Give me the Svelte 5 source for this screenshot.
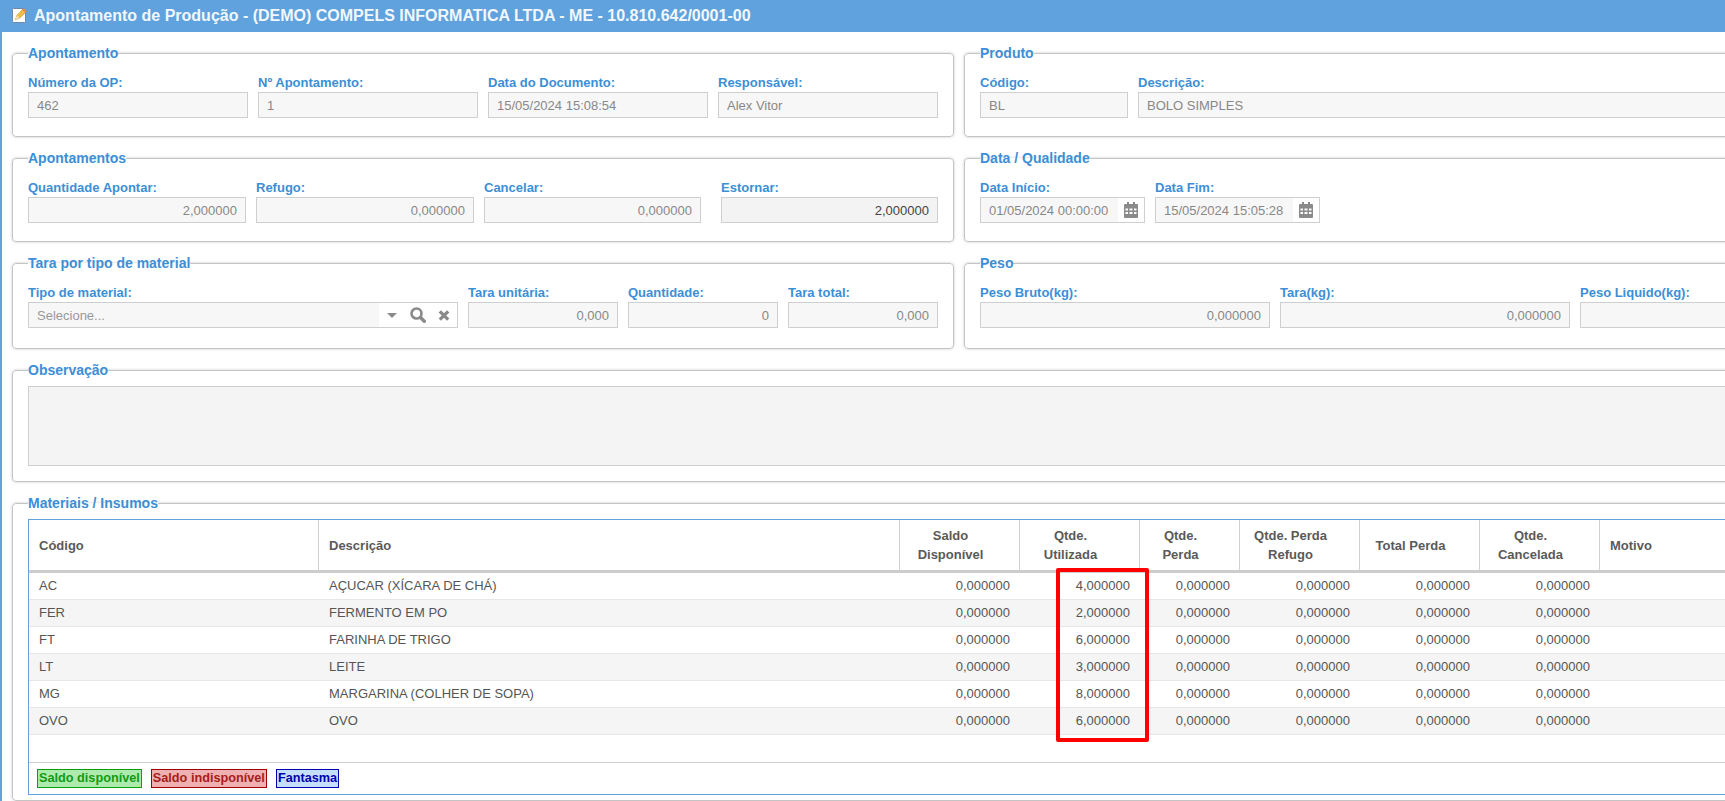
<script>
  const rows = [
    ['AC', 'AÇUCAR (XÍCARA DE CHÁ)', '4,000000'],
    ['FER', 'FERMENTO EM PO', '2,000000'],
    ['FT', 'FARINHA DE TRIGO', '6,000000'],
    ['LT', 'LEITE', '3,000000'],
    ['MG', 'MARGARINA (COLHER DE SOPA)', '8,000000'],
    ['OVO', 'OVO', '6,000000']
  ];
  const zero = '0,000000';
</script>

{#snippet calendar()}
  <svg class="cal" width="14" height="16" viewBox="0 0 14 16" aria-hidden="true">
    <path fill="#8a8a8a" fill-rule="evenodd" d="M3 0h2v2h4V0h2v2h2a1 1 0 0 1 1 1v12a1 1 0 0 1-1 1H1a1 1 0 0 1-1-1V3a1 1 0 0 1 1-1h2V0ZM1.500 6.500v2h2.500v-2H1.500Zm4 0v2h3v-2h-3Zm4.500 0v2h2.500v-2H10Zm-8.500 3.500v2h2.500v-2H1.500Zm4 0v2h3v-2h-3Zm4.500 0v2h2.500v-2H10Z"/>
  </svg>
{/snippet}

<div class="page">
  <header class="bar">
    <svg class="note" width="15" height="16" viewBox="0 0 15 16" aria-hidden="true">
      <rect x="0.500" y="1.500" width="13" height="14" rx="1" fill="#fdfdfd" stroke="#6f88a8"/>
      <path d="M3.500 12.500 5 8.500 11.500 1.500 14.500 4.500 7.500 11Z" fill="#f4bf45" stroke="#c98a1c" stroke-width="0.700" stroke-linejoin="round"/>
      <path d="M3.500 12.500 5 8.500 7.500 11Z" fill="#f6e3bd"/>
      <path d="M11.500 1.500 14.500 4.500 13.200 5.800 10.200 2.900Z" fill="#e08a6c"/>
    </svg>
    <h1>Apontamento de Produção - (DEMO) COMPELS INFORMATICA LTDA - ME - 10.810.642/0001-00</h1>
  </header>

  <main class="main">
    <div class="pair">
      <fieldset class="pb18">
        <legend>Apontamento</legend>
        <div class="fields f-ap">
          <label><span>Número da OP:</span><input disabled value="462" /></label>
          <label><span>Nº Apontamento:</span><input disabled value="1" /></label>
          <label><span>Data do Documento:</span><input disabled value="15/05/2024 15:08:54" /></label>
          <label><span>Responsável:</span><input disabled value="Alex Vitor" /></label>
        </div>
      </fieldset>
      <fieldset class="pb18">
        <legend>Produto</legend>
        <div class="fields f-prod">
          <label><span>Código:</span><input disabled value="BL" /></label>
          <label><span>Descrição:</span><input disabled value="BOLO SIMPLES" /></label>
        </div>
      </fieldset>
    </div>

    <div class="pair">
      <fieldset class="pb18">
        <legend>Apontamentos</legend>
        <div class="fields f-qty">
          <label><span>Quantidade Apontar:</span><input class="num" disabled value="2,000000" /></label>
          <label><span>Refugo:</span><input class="num" disabled value={zero} /></label>
          <label><span>Cancelar:</span><input class="num" disabled value={zero} /></label>
          <label class="estornar"><span>Estornar:</span><input class="num strong" disabled value="2,000000" /></label>
        </div>
      </fieldset>
      <fieldset class="pb18">
        <legend>Data / Qualidade</legend>
        <div class="fields f-date">
          <div class="fld">
            <span class="lbl">Data Início:</span>
            <div class="combo"><div class="value">01/05/2024 00:00:00</div><div class="addon">{@render calendar()}</div></div>
          </div>
          <div class="fld">
            <span class="lbl">Data Fim:</span>
            <div class="combo"><div class="value">15/05/2024 15:05:28</div><div class="addon">{@render calendar()}</div></div>
          </div>
        </div>
      </fieldset>
    </div>

    <div class="pair">
      <fieldset class="pb20">
        <legend>Tara por tipo de material</legend>
        <div class="fields f-tara">
          <div class="fld">
            <span class="lbl">Tipo de material:</span>
            <div class="combo">
              <div class="value ph">Selecione...</div>
              <div class="addon tools">
                <svg width="10" height="5" viewBox="0 0 10 5" aria-hidden="true"><path d="M0 0h10L5 5Z" fill="#8a8a8a"/></svg>
                <svg width="16" height="16" viewBox="0 0 16 16" aria-hidden="true"><circle cx="6.500" cy="6.500" r="5" fill="none" stroke="#8a8a8a" stroke-width="2.600"/><path d="M10.500 10.500 14.300 14.300" stroke="#8a8a8a" stroke-width="3.400" stroke-linecap="round"/></svg>
                <svg class="x" width="12" height="11" viewBox="0 0 12 11" aria-hidden="true"><path d="M1.800 1.300 10.200 9.700M10.200 1.300 1.800 9.700" stroke="#8a8a8a" stroke-width="3.300"/></svg>
              </div>
            </div>
          </div>
          <label><span>Tara unitária:</span><input class="num" disabled value="0,000" /></label>
          <label><span>Quantidade:</span><input class="num" disabled value="0" /></label>
          <label><span>Tara total:</span><input class="num" disabled value="0,000" /></label>
        </div>
      </fieldset>
      <fieldset class="pb20">
        <legend>Peso</legend>
        <div class="fields f-peso">
          <label><span>Peso Bruto(kg):</span><input class="num" disabled value={zero} /></label>
          <label><span>Tara(kg):</span><input class="num" disabled value={zero} /></label>
          <label><span>Peso Liquido(kg):</span><input class="num" disabled value={zero} /></label>
        </div>
      </fieldset>
    </div>

    <fieldset class="wide pb15">
      <legend>Observação</legend>
      <textarea class="obs" disabled></textarea>
    </fieldset>

    <fieldset class="wide last">
      <legend>Materiais / Insumos</legend>
      <div class="grid">
        <table>
          <colgroup>
            <col class="c290" /><col class="c581" /><col class="c120" /><col class="c120" /><col class="c100" /><col class="c120" /><col class="c120" /><col class="c120" /><col />
          </colgroup>
          <thead>
            <tr>
              <th class="l">Código</th>
              <th class="l">Descrição</th>
              <th>Saldo<br />Disponível</th>
              <th>Qtde.<br />Utilizada</th>
              <th>Qtde.<br />Perda</th>
              <th>Qtde. Perda<br />Refugo</th>
              <th>Total Perda</th>
              <th>Qtde.<br />Cancelada</th>
              <th class="l">Motivo</th>
            </tr>
          </thead>
          <tbody>
            {#each rows as r}
              <tr>
                <td>{r[0]}</td>
                <td>{r[1]}</td>
                <td class="n">{zero}</td>
                <td class="n">{r[2]}</td>
                <td class="n">{zero}</td>
                <td class="n">{zero}</td>
                <td class="n">{zero}</td>
                <td class="n">{zero}</td>
                <td></td>
              </tr>
            {/each}
          </tbody>
        </table>
        <div class="spacer"></div>
        <div class="foot">
          <span class="chip green">Saldo disponível</span>
          <span class="chip red">Saldo indisponível</span>
          <span class="chip blue">Fantasma</span>
        </div>
        <div class="mark"></div>
      </div>
    </fieldset>
  </main>
</div>

<style>
  :global(body) {
    margin: 0;
    background: #fff;
    overflow: hidden;
  }
  .page {
    width: 1725px;
    height: 801px;
    overflow: hidden;
    font-family: "Liberation Sans", Arial, sans-serif;
    font-size: 13px;
    color: #555;
  }
  .bar {
    height: 32px;
    background: #5fa2dd;
    display: flex;
    align-items: center;
    padding-left: 12px;
    gap: 7px;
    box-sizing: border-box;
  }
  .note {
    flex: none;
    margin-top: -2px;
  }
  h1 {
    margin: 0;
    font-size: 16px;
    font-weight: bold;
    color: #f2f7fc;
    white-space: nowrap;
  }
  .main {
    width: 1915px;
    height: 769px;
    box-sizing: border-box;
    border-left: 2px solid #5fa2dd;
    padding: 13px 0 0 10px;
    display: flex;
    flex-direction: column;
    gap: 13px;
  }
  .pair {
    display: grid;
    grid-template-columns: 942px 942px;
    column-gap: 10px;
  }
  fieldset {
    margin: 0;
    min-width: 0;
    padding: 0 15px;
    border: 1px solid #c4c4c4;
    border-radius: 4px;
    box-shadow: 0 0 3px rgba(0, 0, 0, 0.2);
    background: #fff;
  }
  .pb18 { padding-bottom: 18px; }
  .pb20 { padding-bottom: 20px; }
  .pb15 { padding-bottom: 15px; }
  .wide { width: 1894px; box-sizing: border-box; }
  .last { flex: 1; padding-bottom: 0; }
  legend {
    padding: 0;
    font-size: 14px;
    line-height: 16px;
    font-weight: bold;
    color: #3c8fd6;
  }
  .fields {
    display: grid;
    padding-top: 14px;
    column-gap: 10px;
  }
  .f-ap { grid-template-columns: repeat(4, 220px); }
  .f-prod { grid-template-columns: 148px 1fr; }
  .f-qty { grid-template-columns: 218px 218px 217px 217px; }
  .estornar { margin-left: 10px; width: 217px; }
  .f-date { grid-template-columns: 165px 165px; }
  .f-tara { grid-template-columns: 430px 150px 150px 150px; }
  .f-peso { grid-template-columns: 290px 290px 290px; }
  label, .fld {
    display: flex;
    flex-direction: column;
    min-width: 0;
  }
  label span, .lbl {
    font-size: 13px;
    line-height: 16px;
    margin-bottom: 1px;
    color: #3c8fd6;
    font-weight: bold;
  }
  input {
    box-sizing: border-box;
    width: 100%;
    height: 26px;
    margin: 0;
    padding: 0 8px;
    border: 1px solid #cfcfcf;
    background: #f7f7f7;
    font: 13px "Liberation Sans", Arial, sans-serif;
    color: #888;
    -webkit-text-fill-color: #888;
    opacity: 1;
  }
  .num { text-align: right; }
  .strong {
    background: #f3f3f3;
    color: #444;
    -webkit-text-fill-color: #444;
  }
  .combo {
    box-sizing: border-box;
    height: 26px;
    display: flex;
    border: 1px solid #cfcfcf;
    background: #fff;
  }
  .value {
    flex: 1;
    min-width: 0;
    background: #f7f7f7;
    line-height: 25px;
    padding-left: 8px;
    color: #888;
    white-space: nowrap;
  }
  .ph { color: #999; }
  .addon {
    flex: none;
    width: 26px;
    display: flex;
    align-items: center;
    justify-content: center;
  }
  .cal { display: block; }
  .tools {
    width: 78px;
    gap: 13px;
    justify-content: flex-start;
    padding-left: 8px;
    box-sizing: border-box;
  }
  .x { margin-left: -1px; }
  .obs {
    display: block;
    box-sizing: border-box;
    width: 100%;
    height: 80px;
    margin: 8px 0 0;
    border: 1px solid #cfcfcf;
    background: #f4f4f4;
    opacity: 1;
    resize: none;
    outline: none;
  }
  .grid {
    position: relative;
    margin-top: 8px;
    border: 1px solid #5fa2dd;
    background: #fff;
  }
  table {
    width: 100%;
    table-layout: fixed;
    border-collapse: separate;
    border-spacing: 0;
    font-size: 13px;
  }
  .c290 { width: 290px; }
  .c581 { width: 581px; }
  .c120 { width: 120px; }
  .c100 { width: 100px; }
  th {
    height: 53px;
    padding: 0 28px 0 10px;
    box-sizing: border-box;
    border-right: 1px solid #d0d0d0;
    border-bottom: 3px solid #ccc;
    font-weight: bold;
    line-height: 19px;
    color: #5a5a5a;
    text-align: center;
  }
  th.l { text-align: left; }
  th:last-child { border-right: 0; }
  td {
    height: 27px;
    box-sizing: border-box;
    padding: 0 10px 2px;
    border-bottom: 1px solid #e6e6e6;
    color: #555;
    white-space: nowrap;
  }
  td.n { text-align: right; }
  tbody tr:nth-child(even) td { background: #f5f5f5; }
  .spacer {
    height: 27px;
    border-bottom: 1px solid #cfcfcf;
  }
  .foot {
    height: 31px;
    display: flex;
    align-items: center;
    gap: 9px;
    padding-left: 8px;
    box-sizing: border-box;
  }
  .chip {
    box-sizing: border-box;
    height: 19px;
    line-height: 17px;
    padding: 0 1px;
    border: 1px solid;
    font-size: 12.700px;
    font-weight: bold;
    white-space: nowrap;
  }
  .green { background: #aeeaae; border-color: #0a9e0a; color: #129a12; }
  .red { background: #eeb0b0; border-color: #a00000; color: #a81c1c; }
  .blue { background: #c5defc; border-color: #0000b0; color: #0000b0; }
  .mark {
    position: absolute;
    left: 1027px;
    top: 48px;
    width: 93px;
    height: 174px;
    box-sizing: border-box;
    border: 4px solid #f00;
    border-radius: 2px;
    pointer-events: none;
  }
</style>
